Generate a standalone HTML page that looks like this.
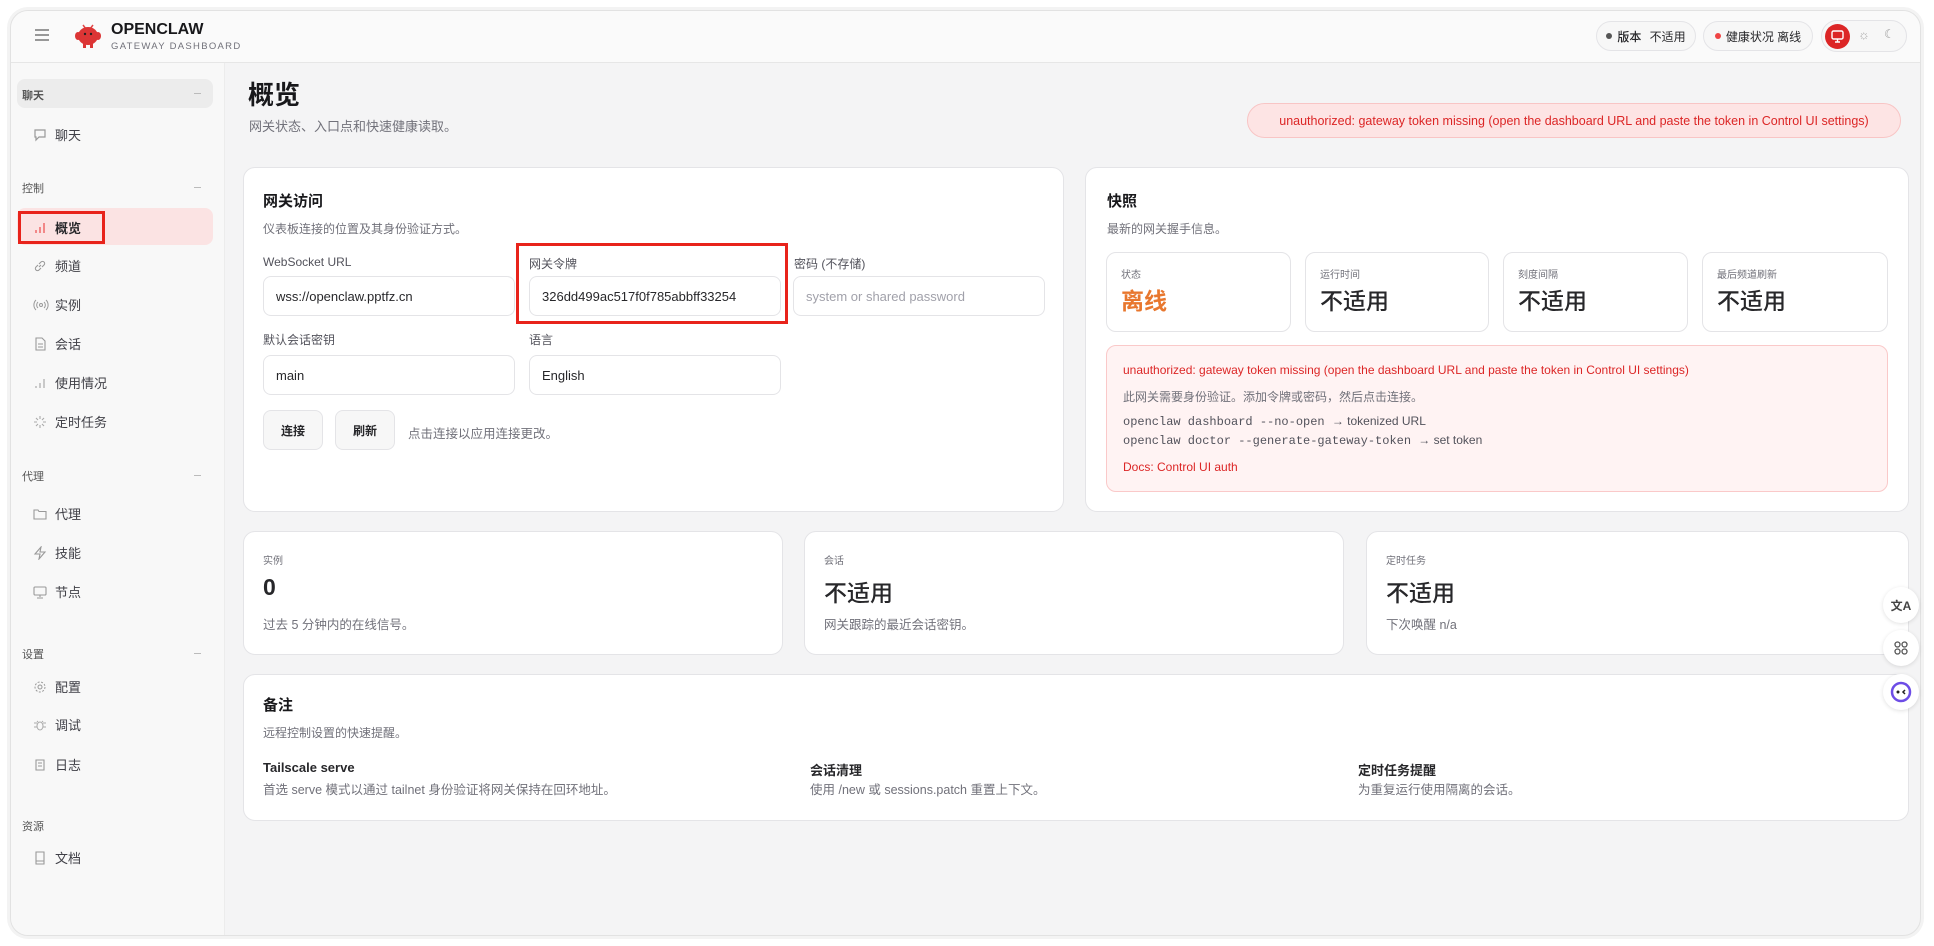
<!DOCTYPE html>
<html><head><meta charset="utf-8"><style>
*{box-sizing:border-box;margin:0;padding:0}
body{width:1934px;height:946px;background:#fff;font-family:"Liberation Sans","Noto Sans CJK SC",sans-serif;color:#27272a;position:relative;overflow:hidden}
.abs{position:absolute}
.win{left:10px;top:10px;width:1911px;height:926px;border:1px solid #e2e2e2;border-radius:18px;background:#f4f4f5;overflow:hidden;box-shadow:0 0 0 3px #f3f3f3}
.hdr{left:0;top:0;width:100%;height:52px;background:#fafafa;border-bottom:1px solid #e6e6e6}
.side{left:0;top:52px;width:214px;height:900px;background:#f8f8f8;border-right:1px solid #ececec}
.grp{font-size:11px;color:#555;font-weight:bold}
.dash{position:absolute;left:183px;width:7px;height:1px;background:#bbb}
.item{font-size:13px;color:#3f3f46;display:flex;align-items:center}
.item svg{position:absolute;left:-22px}
.card{background:#fff;border:1px solid #e4e4e7;border-radius:12px}
.lbl{font-size:12px;color:#52525b}
.inp{background:#fff;border:1px solid #e4e4e7;border-radius:8px;font-size:13px;color:#27272a;padding-left:12px;display:flex;align-items:center}
.h{font-size:15px;font-weight:bold;color:#18181b}
.sub{font-size:12px;color:#71717a}
.stat{border:1px solid #e4e4e7;border-radius:10px;background:#fff}
.stat .l{position:absolute;left:14px;top:13px;font-size:10px;color:#71717a}
.stat .v{position:absolute;left:14px;top:29px;font-size:23px;color:#27272a;font-weight:500}
.btn{background:#f7f7f7;border:1px solid #e4e4e7;border-radius:8px;font-size:12px;font-weight:bold;display:flex;align-items:center;justify-content:center}
.mono{font-family:"Liberation Mono","DejaVu Sans Mono",monospace;font-size:12px;color:#52525b}
.fab{width:36px;height:36px;border-radius:50%;background:#fff;box-shadow:0 1px 4px rgba(0,0,0,.12);display:flex;align-items:center;justify-content:center}
</style></head><body>
<div class="abs win">
 <div class="abs hdr">
  <svg class="abs" style="left:22px;top:16px" width="18" height="16" viewBox="0 0 18 16"><path d="M2 3h14M2 8h14M2 13h14" stroke="#777" stroke-width="1.6"/></svg>
  <svg class="abs" style="left:62px;top:10px" width="30" height="30" viewBox="0 0 30 30"><path d="M10 4l3 4M20 4l-3 4" stroke="#e04848" stroke-width="1.5"/><ellipse cx="15" cy="15" rx="10" ry="9" fill="#dc3535"/><ellipse cx="5" cy="15" rx="3" ry="4" fill="#dc3535"/><ellipse cx="25" cy="15" rx="3" ry="4" fill="#dc3535"/><rect x="10" y="22" width="3" height="5" fill="#dc3535"/><rect x="17" y="22" width="3" height="5" fill="#dc3535"/><circle cx="12" cy="13" r="1.2" fill="#222"/><circle cx="18" cy="13" r="1.2" fill="#222"/></svg>
  <div class="abs" style="left:100px;top:10px;font-size:16px;font-weight:bold;color:#18181b">OPENCLAW</div>
  <div class="abs" style="left:100px;top:30px;font-size:9.5px;letter-spacing:1.3px;color:#71717a">GATEWAY DASHBOARD</div>
  <div class="abs" style="left:1585px;top:10px;width:100px;height:30px;border:1px solid #e4e4e7;border-radius:15px;background:#f7f7f7;font-size:12px;display:flex;align-items:center;justify-content:center;gap:5px"><span style="width:6px;height:6px;border-radius:50%;background:#555;display:inline-block"></span><b style="font-weight:500">版本</b>&nbsp;不适用</div>
  <div class="abs" style="left:1692px;top:10px;width:110px;height:30px;border:1px solid #e4e4e7;border-radius:15px;background:#f7f7f7;font-size:12px;display:flex;align-items:center;justify-content:center;gap:5px"><span style="width:6px;height:6px;border-radius:50%;background:#ef4444;display:inline-block"></span>健康状况&nbsp;离线</div>
  <div class="abs" style="left:1810px;top:9px;width:86px;height:32px;border:1px solid #e4e4e7;border-radius:16px;background:#f7f7f7">
   <div class="abs" style="left:3px;top:3px;width:25px;height:25px;border-radius:50%;background:#dc2626"></div>
   <svg class="abs" style="left:8px;top:9px" width="15" height="13" viewBox="0 0 15 13"><rect x="2" y="1" width="11" height="8" rx="1.5" fill="none" stroke="#fff" stroke-width="1.4"/><path d="M7.5 9v2.5M5 12h5" stroke="#fff" stroke-width="1.4"/></svg>
   <div class="abs" style="left:36px;top:6px;font-size:13px;color:#aaa">☼</div>
   <div class="abs" style="left:62px;top:6px;font-size:12px;color:#999">☾</div>
  </div>
 </div>
 <div class="abs side">
  <div class="abs" style="left:6px;top:16px;width:196px;height:29px;background:#ececec;border-radius:8px"></div>
  <div class="abs grp" style="left:11px;top:24px">聊天</div><div class="dash" style="top:30px"></div>
  <div class="abs item" style="left:44px;top:62px"><svg width="14" height="14" viewBox="0 0 14 14"><path d="M2 2h10v7H6l-3 3V9H2z" fill="none" stroke="#999" stroke-width="1.2"/></svg>聊天</div>
  <div class="abs grp" style="left:11px;top:117px;font-weight:normal">控制</div><div class="dash" style="top:124px"></div>
  <div class="abs" style="left:6px;top:145px;width:196px;height:37px;background:#fbe3e3;border-radius:8px"></div>
  <div class="abs" style="left:7px;top:148px;width:87px;height:33px;border:3px solid #e8231b"></div>
  <div class="abs item" style="left:44px;top:155px;font-weight:bold;color:#27272a"><svg width="14" height="14" viewBox="0 0 14 14"><path d="M3 12v-3M7 12V6M11 12V2" stroke="#ef6b6b" stroke-width="1.5"/></svg>概览</div>
  <div class="abs item" style="left:44px;top:193px"><svg width="14" height="14" viewBox="0 0 14 14"><path d="M6 8l2-2M5 6L3 8a2 2 0 003 3l2-2M9 8l2-2a2 2 0 00-3-3L6 5" fill="none" stroke="#999" stroke-width="1.1"/></svg>频道</div>
  <div class="abs item" style="left:44px;top:232px"><svg width="16" height="14" viewBox="0 0 16 14"><circle cx="8" cy="7" r="1.5" fill="none" stroke="#999"/><path d="M5 4a4 4 0 000 6M11 4a4 4 0 010 6M3 2a7 7 0 000 10M13 2a7 7 0 010 10" fill="none" stroke="#999"/></svg>实例</div>
  <div class="abs item" style="left:44px;top:271px"><svg width="14" height="14" viewBox="0 0 14 14"><path d="M3 1h6l3 3v9H3z M5 7h5M5 10h5" fill="none" stroke="#999" stroke-width="1.1"/></svg>会话</div>
  <div class="abs item" style="left:44px;top:310px"><svg width="14" height="14" viewBox="0 0 14 14"><path d="M3 12v-2M7 12V7M11 12V3" stroke="#aaa" stroke-width="1.2"/></svg>使用情况</div>
  <div class="abs item" style="left:44px;top:349px"><svg width="14" height="14" viewBox="0 0 14 14"><path d="M7 1v3M7 10v3M1 7h3M10 7h3M3 3l2 2M9 9l2 2M11 3L9 5M5 9l-2 2" stroke="#aaa" stroke-width="1.1"/></svg>定时任务</div>
  <div class="abs grp" style="left:11px;top:405px;font-weight:normal">代理</div><div class="dash" style="top:412px"></div>
  <div class="abs item" style="left:44px;top:441px"><svg width="14" height="14" viewBox="0 0 14 14"><path d="M1 3h4l1 1.5h7V12H1z" fill="none" stroke="#999" stroke-width="1.1"/></svg>代理</div>
  <div class="abs item" style="left:44px;top:480px"><svg width="14" height="14" viewBox="0 0 14 14"><path d="M8 1L2 8h5l-1 5 6-7H7z" fill="none" stroke="#999" stroke-width="1.1"/></svg>技能</div>
  <div class="abs item" style="left:44px;top:519px"><svg width="14" height="14" viewBox="0 0 14 14"><rect x="1" y="2" width="12" height="8" rx="1" fill="none" stroke="#999" stroke-width="1.1"/><path d="M7 10v2M4 13h6" stroke="#999" stroke-width="1.1"/></svg>节点</div>
  <div class="abs grp" style="left:11px;top:583px;font-weight:normal">设置</div><div class="dash" style="top:590px"></div>
  <div class="abs item" style="left:44px;top:614px"><svg width="14" height="14" viewBox="0 0 14 14"><circle cx="7" cy="7" r="2" fill="none" stroke="#999"/><circle cx="7" cy="7" r="5" fill="none" stroke="#999" stroke-dasharray="2 1.5"/></svg>配置</div>
  <div class="abs item" style="left:44px;top:652px"><svg width="14" height="14" viewBox="0 0 14 14"><ellipse cx="7" cy="8" rx="3" ry="4" fill="none" stroke="#aaa"/><path d="M1 5h3M10 5h3M1 9h3M10 9h3M4 3l1 1M10 3L9 4" stroke="#aaa"/></svg>调试</div>
  <div class="abs item" style="left:44px;top:692px"><svg width="14" height="14" viewBox="0 0 14 14"><path d="M3 2h8v10H3zM5 5h4M5 8h4" fill="none" stroke="#999" stroke-width="1.1"/></svg>日志</div>
  <div class="abs grp" style="left:11px;top:755px;font-weight:normal">资源</div>
  <div class="abs item" style="left:44px;top:785px"><svg width="14" height="14" viewBox="0 0 14 14"><path d="M3 1h8v12H3zM3 10h8" fill="none" stroke="#999" stroke-width="1.1"/></svg>文档</div>
 </div>
 <!-- main -->
 <div class="abs" style="left:237px;top:64px;font-size:26px;font-weight:bold;color:#18181b">概览</div>
 <div class="abs" style="left:238px;top:105px;font-size:13px;color:#71717a">网关状态、入口点和快速健康读取。</div>
 <div class="abs" style="left:1236px;top:92px;width:654px;height:35px;border:1px solid #f8c5c5;background:#fde4e4;border-radius:18px;font-size:12.5px;color:#dc2626;display:flex;align-items:center;justify-content:center">unauthorized: gateway token missing (open the dashboard URL and paste the token in Control UI settings)</div>

 <div class="abs card" style="left:232px;top:156px;width:821px;height:345px">
  <div class="abs h" style="left:19px;top:22px">网关访问</div>
  <div class="abs sub" style="left:19px;top:52px">仪表板连接的位置及其身份验证方式。</div>
  <div class="abs lbl" style="left:19px;top:87px">WebSocket URL</div>
  <div class="abs lbl" style="left:285px;top:87px">网关令牌</div>
  <div class="abs lbl" style="left:550px;top:87px">密码 (不存储)</div>
  <div class="abs inp" style="left:19px;top:108px;width:252px;height:40px">wss://openclaw.pptfz.cn</div>
  <div class="abs inp" style="left:285px;top:108px;width:252px;height:40px">326dd499ac517f0f785abbff33254</div>
  <div class="abs inp" style="left:549px;top:108px;width:252px;height:40px;color:#a1a1aa">system or shared password</div>
  <div class="abs" style="left:272px;top:75px;width:272px;height:81px;border:3px solid #e8231b"></div>
  <div class="abs lbl" style="left:19px;top:163px">默认会话密钥</div>
  <div class="abs lbl" style="left:285px;top:163px">语言</div>
  <div class="abs inp" style="left:19px;top:187px;width:252px;height:40px">main</div>
  <div class="abs inp" style="left:285px;top:187px;width:252px;height:40px">English</div>
  <div class="abs btn" style="left:19px;top:242px;width:60px;height:40px">连接</div>
  <div class="abs btn" style="left:91px;top:242px;width:60px;height:40px">刷新</div>
  <div class="abs sub" style="left:164px;top:255px;font-size:12.5px">点击连接以应用连接更改。</div>
 </div>

 <div class="abs card" style="left:1074px;top:156px;width:824px;height:345px">
  <div class="abs h" style="left:21px;top:22px">快照</div>
  <div class="abs sub" style="left:21px;top:52px">最新的网关握手信息。</div>
  <div class="abs stat" style="left:20px;top:84px;width:185px;height:80px"><div class="l">状态</div><div class="v" style="color:#e8772e;font-weight:bold">离线</div></div>
  <div class="abs stat" style="left:219px;top:84px;width:184px;height:80px"><div class="l">运行时间</div><div class="v">不适用</div></div>
  <div class="abs stat" style="left:417px;top:84px;width:185px;height:80px"><div class="l">刻度间隔</div><div class="v">不适用</div></div>
  <div class="abs stat" style="left:616px;top:84px;width:186px;height:80px"><div class="l">最后频道刷新</div><div class="v">不适用</div></div>
  <div class="abs" style="left:20px;top:177px;width:782px;height:147px;border:1px solid #fac9c9;background:#fff3f3;border-radius:10px">
   <div class="abs" style="left:16px;top:17px;font-size:12px;color:#dc2626;white-space:nowrap">unauthorized: gateway token missing (open the dashboard URL and paste the token in Control UI settings)</div>
   <div class="abs sub" style="left:16px;top:42px">此网关需要身份验证。添加令牌或密码，然后点击连接。</div>
   <div class="abs mono" style="left:16px;top:68px">openclaw dashboard --no-open <span style="font-family:'Liberation Sans',sans-serif">→ tokenized URL</span></div>
   <div class="abs mono" style="left:16px;top:87px">openclaw doctor --generate-gateway-token <span style="font-family:'Liberation Sans',sans-serif">→ set token</span></div>
   <div class="abs" style="left:16px;top:114px;font-size:12px;color:#dc2626">Docs: Control UI auth</div>
  </div>
 </div>

 <div class="abs card" style="left:232px;top:520px;width:540px;height:124px">
  <div class="abs sub" style="left:19px;top:20px;font-size:10px">实例</div>
  <div class="abs" style="left:19px;top:42px;font-size:23px;font-weight:bold">0</div>
  <div class="abs sub" style="left:19px;top:82px;font-size:12.5px">过去 5 分钟内的在线信号。</div>
 </div>
 <div class="abs card" style="left:793px;top:520px;width:540px;height:124px">
  <div class="abs sub" style="left:19px;top:20px;font-size:10px">会话</div>
  <div class="abs" style="left:19px;top:42px;font-size:23px;font-weight:500">不适用</div>
  <div class="abs sub" style="left:19px;top:82px;font-size:12.5px">网关跟踪的最近会话密钥。</div>
 </div>
 <div class="abs card" style="left:1355px;top:520px;width:543px;height:124px">
  <div class="abs sub" style="left:19px;top:20px;font-size:10px">定时任务</div>
  <div class="abs" style="left:19px;top:42px;font-size:23px;font-weight:500">不适用</div>
  <div class="abs sub" style="left:19px;top:82px;font-size:12.5px">下次唤醒 n/a</div>
 </div>

 <div class="abs card" style="left:232px;top:663px;width:1666px;height:147px">
  <div class="abs h" style="left:19px;top:19px">备注</div>
  <div class="abs sub" style="left:19px;top:49px">远程控制设置的快速提醒。</div>
  <div class="abs" style="left:19px;top:85px;font-size:13px;font-weight:bold">Tailscale serve</div>
  <div class="abs sub" style="left:19px;top:104px;font-size:12.5px">首选 serve 模式以通过 tailnet 身份验证将网关保持在回环地址。</div>
  <div class="abs" style="left:566px;top:85px;font-size:13px;font-weight:bold">会话清理</div>
  <div class="abs sub" style="left:566px;top:104px;font-size:12.5px">使用 /new 或 sessions.patch 重置上下文。</div>
  <div class="abs" style="left:1114px;top:85px;font-size:13px;font-weight:bold">定时任务提醒</div>
  <div class="abs sub" style="left:1114px;top:104px;font-size:12.5px">为重复运行使用隔离的会话。</div>
 </div>
</div>
<div class="abs fab" style="left:1883px;top:587px;font-size:12px;color:#444;font-weight:bold">文A</div>
<div class="abs fab" style="left:1883px;top:630px"><svg width="16" height="16" viewBox="0 0 16 16"><g fill="none" stroke="#555" stroke-width="1.3"><circle cx="4.5" cy="4.5" r="2.5"/><circle cx="11.5" cy="4.5" r="2.5"/><circle cx="4.5" cy="11.5" r="2.5"/><circle cx="11.5" cy="11.5" r="2.5"/></g></svg></div>
<div class="abs fab" style="left:1883px;top:674px"><svg width="22" height="22" viewBox="0 0 22 22"><circle cx="11" cy="11" r="9" fill="#fff" stroke="#6d4de6" stroke-width="2.5"/><circle cx="8" cy="11" r="1.5" fill="#222"/><path d="M15 9l-2 2 2 2" stroke="#222" stroke-width="1.5" fill="none"/></svg></div>
</body></html>
